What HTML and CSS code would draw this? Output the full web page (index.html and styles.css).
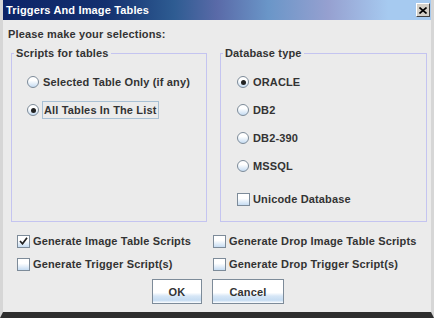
FILE: index.html
```html
<!DOCTYPE html>
<html>
<head>
<meta charset="utf-8">
<link rel="stylesheet" href="styles.css">
</head>
<body>
<div class="window">
  <div class="titlebar">
    <span class="title">Triggers And Image Tables</span>
    <span class="close">
      <svg width="8" height="7" viewBox="0 0 8 7"><path d="M0.5 0.5 L7.5 6.5 M7.5 0.5 L0.5 6.5" stroke="#000" stroke-width="1.6"/></svg>
    </span>
  </div>
  <div class="content">
    <div class="prompt">Please make your selections:</div>
    <div class="groups">
      <fieldset class="group group-left">
        <legend>Scripts for tables</legend>
        <div class="opt-list">
          <div class="opt"><span class="radio"></span><span class="lbl">Selected Table Only (if any)</span></div>
          <div class="opt"><span class="radio on"></span><span class="lbl focus">All Tables In The List</span></div>
        </div>
      </fieldset>
      <fieldset class="group group-right">
        <legend>Database type</legend>
        <div class="opt-list">
          <div class="opt"><span class="radio on"></span><span class="lbl">ORACLE</span></div>
          <div class="opt"><span class="radio"></span><span class="lbl">DB2</span></div>
          <div class="opt"><span class="radio"></span><span class="lbl">DB2-390</span></div>
          <div class="opt"><span class="radio"></span><span class="lbl">MSSQL</span></div>
          <div class="opt opt-check"><span class="check"></span><span class="lbl">Unicode Database</span></div>
        </div>
      </fieldset>
    </div>
    <div class="options">
      <div class="opt"><span class="check on"><svg width="9" height="8" viewBox="0 0 9 8"><path d="M1 4 L3.5 6.8 L8 0.8" stroke="#222" stroke-width="1.7" fill="none"/></svg></span><span class="lbl">Generate Image Table Scripts</span></div>
      <div class="opt"><span class="check"></span><span class="lbl">Generate Drop Image Table Scripts</span></div>
      <div class="opt"><span class="check"></span><span class="lbl">Generate Trigger Script(s)</span></div>
      <div class="opt"><span class="check"></span><span class="lbl">Generate Drop Trigger Script(s)</span></div>
    </div>
    <div class="buttons">
      <button class="btn btn-ok">OK</button>
      <button class="btn btn-cancel">Cancel</button>
    </div>
  </div>
</div>
</body>
</html>
```
FILE: styles.css
```css
html, body {
  margin: 0;
  padding: 0;
}
body {
  width: 434px;
  height: 318px;
  overflow: hidden;
  font-family: "Liberation Sans", Arial, sans-serif;
  font-weight: bold;
  font-size: 11px;
  letter-spacing: 0.15px;
  color: #333333;
}
.window {
  box-sizing: border-box;
  width: 434px;
  height: 318px;
  background: #ebebeb;
  border-left: 3px solid #d6d6d6;
  border-right: 3px solid #d6d6d6;
  border-bottom: 6px solid #2e2e2e;
  display: flex;
  flex-direction: column;
}
.titlebar {
  height: 20px;
  flex: none;
  display: flex;
  align-items: center;
  background: linear-gradient(90deg, #0c2468 0%, #14306f 24%, #2e5c92 40%, #5a6aa8 50%, #6a96c8 62%, #96a0d0 76%, #a6caf0 90%, #a6caf0 100%);
  padding-left: 3px;
  padding-right: 1px;
}
.title {
  color: #ffffff;
  font-size: 11px;
  line-height: 14px;
}
.close {
  margin-left: auto;
  box-sizing: border-box;
  width: 14px;
  height: 14px;
  background: #d4d0c8;
  border-top: 1px solid #ffffff;
  border-left: 1px solid #ffffff;
  border-right: 1px solid #404040;
  border-bottom: 1px solid #404040;
  display: flex;
  align-items: center;
  justify-content: center;
}
.content {
  flex: 1;
  padding: 7px 5px 0 5px;
  display: flex;
  flex-direction: column;
}
.prompt {
  line-height: 14px;
  height: 14px;
}
.groups {
  margin-top: 5px;
  margin-left: 3px;
  display: grid;
  grid-template-columns: 196px 207px;
  column-gap: 13px;
  height: 176px;
}
.group {
  margin: 0;
  padding: 0;
  border: 1px solid #c4c4f0;
  min-width: 0;
}
.group legend {
  padding: 0 2px;
  margin-left: 2px;
  line-height: 14px;
  font-size: 11px;
}
.opt-list {
  display: flex;
  flex-direction: column;
  padding-top: 15px;
}
.group-left .opt-list {
  padding-left: 15px;
}
.group-right .opt-list {
  padding-left: 16px;
}
.opt {
  display: flex;
  align-items: center;
  height: 14px;
  line-height: 14px;
  margin-bottom: 14px;
}
.opt-check {
  margin-top: 5px;
}
.radio {
  box-sizing: border-box;
  width: 12px;
  height: 12px;
  border-radius: 50%;
  border: 1px solid #7d8b99;
  background: linear-gradient(180deg, #ffffff 0%, #ffffff 35%, #c6dcf2 100%);
  margin-right: 4px;
  flex: none;
  display: flex;
  align-items: center;
  justify-content: center;
}
.radio.on::after {
  content: "";
  width: 5px;
  height: 5px;
  border-radius: 50%;
  background: #222222;
}
.check {
  box-sizing: border-box;
  width: 13px;
  height: 13px;
  border: 1px solid #7d8b99;
  background: linear-gradient(180deg, #ffffff 0%, #ffffff 40%, #c6dcf2 100%);
  margin-right: 3px;
  flex: none;
  display: flex;
  align-items: center;
  justify-content: center;
}
.lbl.focus {
  border: 1px solid #a8c0d4;
  padding: 1px;
  margin-left: -1px;
  line-height: 14px;
}
.options {
  margin-top: 12px;
  margin-left: 9px;
  display: grid;
  grid-template-columns: 196px 210px;
  row-gap: 9px;
}
.options .opt {
  margin-bottom: 0;
}
.buttons {
  margin-top: 8px;
  display: flex;
  justify-content: center;
  gap: 10px;
  padding-left: 2px;
}
.btn {
  box-sizing: border-box;
  height: 25px;
  border: 1px solid #7d8b99;
  background: linear-gradient(180deg, #ffffff 0%, #ffffff 55%, #d6e6f6 70%, #c6dcf2 88%, #ffffff 100%);
  font-family: "Liberation Sans", Arial, sans-serif;
  font-weight: bold;
  font-size: 11px;
  letter-spacing: 0.15px;
  color: #333333;
  padding: 0;
}
.btn-ok {
  width: 50px;
}
.btn-cancel {
  width: 72px;
}
```
